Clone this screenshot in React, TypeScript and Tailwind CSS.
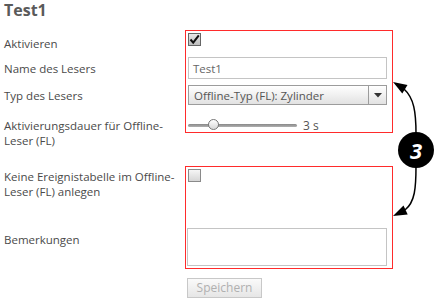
import React from "react";

const font = { fontFamily: '"Open Sans", "Liberation Sans", sans-serif' };

function CheckBox({ checked }: { checked: boolean }) {
  return (
    <div
      className={
        "w-[13px] h-[13px] border flex items-center justify-center " +
        (checked
          ? "border-[#666] bg-gradient-to-b from-[#e8e8e8] to-[#bdbdbd]"
          : "border-[#8a8a8a] bg-gradient-to-b from-[#f6f6f6] to-[#d6d6d6]")
      }
    >
      {checked && (
        <svg width="11" height="11" viewBox="0 0 11 11">
          <path d="M1.5 5.5 L4.2 8.6 L9.8 1.4" fill="none" stroke="#111" strokeWidth="2" />
        </svg>
      )}
    </div>
  );
}

export default function App() {
  return (
    <div className="relative w-[437px] h-[301px] bg-white text-[#4a4a4a] text-[11.5px] leading-[15px]" style={font}>
      <div className="flex flex-col pl-[4px]">
        <div className="h-[31px] text-[16px] leading-[21px] font-bold text-[#5a5a5a]">Test1</div>

        <div className="flex h-[24px]">
          <div className="w-[184px] flex items-center">Aktivieren</div>
          <div className="mt-[2px]">
            <CheckBox checked />
          </div>
        </div>

        <div className="flex h-[26px] items-center">
          <div className="w-[184px]">Name des Lesers</div>
          <div className="w-[199px] h-[22px] border border-[#c4c4c4] bg-white flex items-center pl-[4px] text-[#666]">
            Test1
          </div>
        </div>

        <div className="flex h-[28px] items-center">
          <div className="w-[184px]">Typ des Lesers</div>
          <div className="w-[199px] h-[20px] border border-[#9c9c9c] flex bg-gradient-to-b from-[#ffffff] to-[#e2e2e2]">
            <div className="flex-1 flex items-center pl-[5px] text-[#555]">Offline-Typ (FL): Zylinder</div>
            <div className="w-[18px] border-l border-[#9c9c9c] flex items-center justify-center">
              <svg width="8" height="5" viewBox="0 0 8 5">
                <path d="M0 0 L8 0 L4 4.5 Z" fill="#333" />
              </svg>
            </div>
          </div>
        </div>

        <div className="flex h-[41px] items-start">
          <div className="w-[184px] mt-[9px]">
            Aktivierungsdauer für Offline-
            <br />
            Leser (FL)
          </div>
          <div className="mt-[9px] flex items-center h-[14px]">
            <div className="relative w-[109px] h-[14px] flex items-center">
              <div className="w-full h-[3px] rounded-full bg-gradient-to-b from-[#888] to-[#b0b0b0]" />
              <div className="absolute left-[20px] top-[1px] w-[11px] h-[11px] rounded-full border border-[#777] bg-gradient-to-b from-[#fff] to-[#d8d8d8]" />
            </div>
            <div className="ml-[6px] text-[#555] text-[12px]">3 s</div>
          </div>
        </div>

        <div className="h-[16px]" />

        <div className="flex h-[56px] items-start">
          <div className="w-[184px] mt-[3px]">
            Keine Ereignistabelle im Offline-
            <br />
            Leser (FL) anlegen
          </div>
          <div className="mt-[3px]">
            <CheckBox checked={false} />
          </div>
        </div>

        <div className="flex h-[46px] items-start">
          <div className="w-[183px] mt-[10px]">Bemerkungen</div>
          <div className="mt-[6px] w-[200px] h-[38px] border border-[#c4c4c4] bg-white" />
        </div>

        <div className="flex mt-[10px]">
          <div className="w-[183px]" />
          <button className="w-[75px] h-[20px] border border-[#c8c8c8] bg-gradient-to-b from-[#fafafa] to-[#e6e6e6] text-[#b0b0b0] text-[12px] leading-[18px] flex items-center justify-center">
            Speichern
          </button>
        </div>
      </div>

      {/* annotation overlays */}
      <div className="absolute left-[185px] top-[30px] w-[208px] h-[103px] border border-[#ff2b2b] pointer-events-none" />
      <div className="absolute left-[185px] top-[166px] w-[208px] h-[103px] border border-[#ff2b2b] pointer-events-none" />

      <svg className="absolute left-0 top-0 pointer-events-none" width="437" height="301" viewBox="0 0 437 301">
        <path d="M416 134 C416 112 414 98 404 89" fill="none" stroke="#000" strokeWidth="1.5" />
        <polygon points="393,82 407.5,85 402.3,93.5" fill="#000" />
        <path d="M416 166 C416 188 415 202 405 210" fill="none" stroke="#000" strokeWidth="1.5" />
        <polygon points="393,216 407.7,214.5 403.5,205.5" fill="#000" />
        <circle cx="416" cy="150" r="18" fill="#000" />
      </svg>
      <div
        className="absolute left-[398px] top-[132px] w-[36px] h-[36px] flex items-center justify-center text-white font-bold italic text-[22px] leading-none"
        style={{ fontFamily: '"Open Sans", "Liberation Sans", sans-serif' }}
      >
        3
      </div>
    </div>
  );
}
